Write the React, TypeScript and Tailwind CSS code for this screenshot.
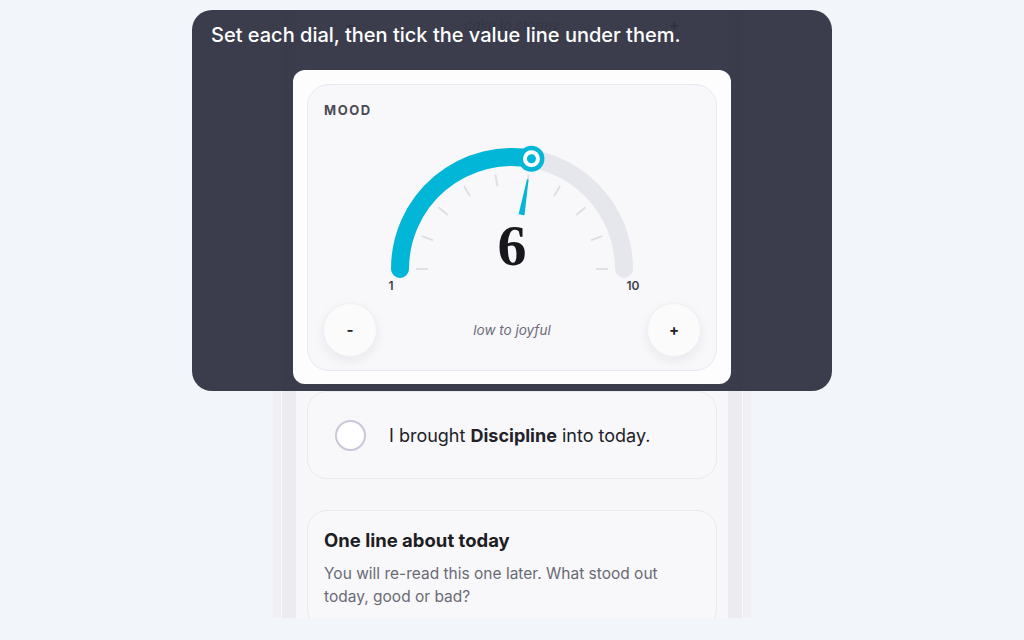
const VALUE = 6;
const CX = 140;
const CY = 129;
const R = 112;
const CYAN = "#02b6d8";

function polar(r: number, deg: number): [number, number] {
  const a = (deg * Math.PI) / 180;
  return [CX + r * Math.cos(a), CY - r * Math.sin(a)];
}

function Gauge({ value }: { value: number }) {
  const angle = 180 - ((value - 1) / 9) * 180;
  const [kx, ky] = polar(R, angle);
  const ticks = Array.from({ length: 10 }, (_, i) => 180 - i * 20);

  // tapered needle pointing at the value
  const rad = (angle * Math.PI) / 180;
  const nx = Math.sin(rad);
  const ny = Math.cos(rad);
  const [bx, by] = polar(55, angle);
  const [tx, ty] = polar(91, angle);
  const needle = [
    [bx + 3 * nx, by + 3 * ny],
    [tx + 0.8 * nx, ty + 0.8 * ny],
    [tx - 0.8 * nx, ty - 0.8 * ny],
    [bx - 3 * nx, by - 3 * ny],
  ]
    .map((p) => p.join(","))
    .join(" ");

  return (
    <svg width="280" height="152" viewBox="0 0 280 152" className="mx-auto block">
      <path
        d={`M ${CX - R} ${CY} A ${R} ${R} 0 0 1 ${CX + R} ${CY}`}
        fill="none"
        stroke="#e6e7ec"
        strokeWidth="18"
        strokeLinecap="round"
      />
      <path
        d={`M ${CX - R} ${CY} A ${R} ${R} 0 0 1 ${kx} ${ky}`}
        fill="none"
        stroke={CYAN}
        strokeWidth="18"
        strokeLinecap="round"
      />
      {ticks.map((t) => {
        const [x1, y1] = polar(84, t);
        const [x2, y2] = polar(96, t);
        return <line key={t} x1={x1} y1={y1} x2={x2} y2={y2} stroke="#dfe0e5" strokeWidth="2" />;
      })}
      <polygon points={needle} fill={CYAN} />
      <circle cx={kx} cy={ky} r="13" fill={CYAN} />
      <circle cx={kx} cy={ky} r="8.5" fill="#ffffff" />
      <circle cx={kx} cy={ky} r="4.5" fill={CYAN} />
      <text
        x={CX}
        y="125"
        textAnchor="middle"
        fontFamily="'Liberation Serif', serif"
        fontWeight="700"
        fontSize="58"
        fill="#17171c"
      >
        {value}
      </text>
      <text x="19" y="150" textAnchor="middle" fontSize="12" fontWeight="600" fill="#3f3f4a" fontFamily="Inter, sans-serif">
        1
      </text>
      <text x="261" y="150" textAnchor="middle" fontSize="12" fontWeight="600" fill="#3f3f4a" fontFamily="Inter, sans-serif">
        10
      </text>
    </svg>
  );
}

function StepButton({ label }: { label: string }) {
  return (
    <button className="w-[54px] h-[54px] rounded-full bg-[#fbfbfc] border border-[#f0f0f3] shadow-[0_4px_12px_rgba(30,30,60,0.07)] flex items-center justify-center text-[15px] font-bold text-[#222]">
      {label}
    </button>
  );
}

function ButtonRow({ hint }: { hint: string }) {
  return (
    <div className="flex items-center justify-between px-[15px]">
      <StepButton label="-" />
      <span className="text-[13.5px] italic text-[#6b6b78]">{hint}</span>
      <StepButton label="+" />
    </div>
  );
}

export default function App() {
  return (
    <div className="relative h-[640px] w-full overflow-hidden bg-[#f2f5fa] pt-[10px] font-[Inter,sans-serif]">
      {/* app column */}
      <div className="mx-auto w-[478px] h-[608px] bg-[#f0eff4] px-[8px]">
        <div className="h-full bg-[#f9f9fb] px-px">
          <div className="h-full bg-[#ebebf0] px-[14px]">
            <div className="flow-root h-full overflow-y-clip overflow-x-visible bg-[#f7f7fa] px-[11px]">
              {/* previous dial, scrolled mostly out of view */}
              <div className="-mt-[76px] h-[130px] rounded-[22px] border border-[#e9e9ef] bg-[#f8f8fb] flex flex-col justify-end pb-[11px]">
                <ButtonRow hint="calm to stormy" />
              </div>

              {/* highlighted dial */}
              <div className="relative z-20 mt-[6px] mb-[-14px] mx-[-14px] p-[14px] pb-[13px] rounded-[12px] bg-[#fdfdfe]">
                <div className="rounded-[22px] border border-[#e9e9ef] bg-[#f8f8fb] pt-[17px] pb-[13px]">
                  <div className="px-[16px] h-[16px] text-[13px] leading-[16px] font-bold tracking-[0.12em] text-[#4b4b55]">
                    MOOD
                  </div>
                  <div className="mt-[22px]">
                    <Gauge value={VALUE} />
                  </div>
                  <div className="mt-[11px]">
                    <ButtonRow hint="low to joyful" />
                  </div>
                </div>
              </div>

              <div className="mt-[21px] h-[88px] rounded-[20px] border border-[#e9e9ef] bg-[#f8f8fb] flex items-center px-[27px] gap-[23px]">
                <span className="w-[31px] h-[31px] rounded-full border-2 border-[#c9c7d8] bg-white shrink-0" />
                <span className="text-[18px] text-[#222228]">
                  I brought <b className="font-bold">Discipline</b> into today.
                </span>
              </div>

              <div className="mt-[31px] rounded-[20px] border border-[#e9e9ef] bg-[#f8f8fb] px-[16px] pt-[17px] pb-[20px]">
                <div className="text-[18.5px] leading-[24px] font-bold text-[#1d1d22]">
                  One line about today
                </div>
                <p className="mt-[10px] pr-[30px] text-[15.5px] leading-[23px] text-[#6a6a74]">
                  You will re-read this one later. What stood out today, good or bad?
                </p>
              </div>
            </div>
          </div>
        </div>
      </div>

      {/* coach-mark overlay */}
      <div className="absolute z-10 left-1/2 -translate-x-1/2 top-[10px] w-[640px] h-[381px] rounded-[20px] bg-[#303342]/95 px-[19px] pt-[13px]">
        <p className="text-[20px] leading-[24px] font-medium text-white">
          Set each dial, then tick the value line under them.
        </p>
      </div>
    </div>
  );
}
